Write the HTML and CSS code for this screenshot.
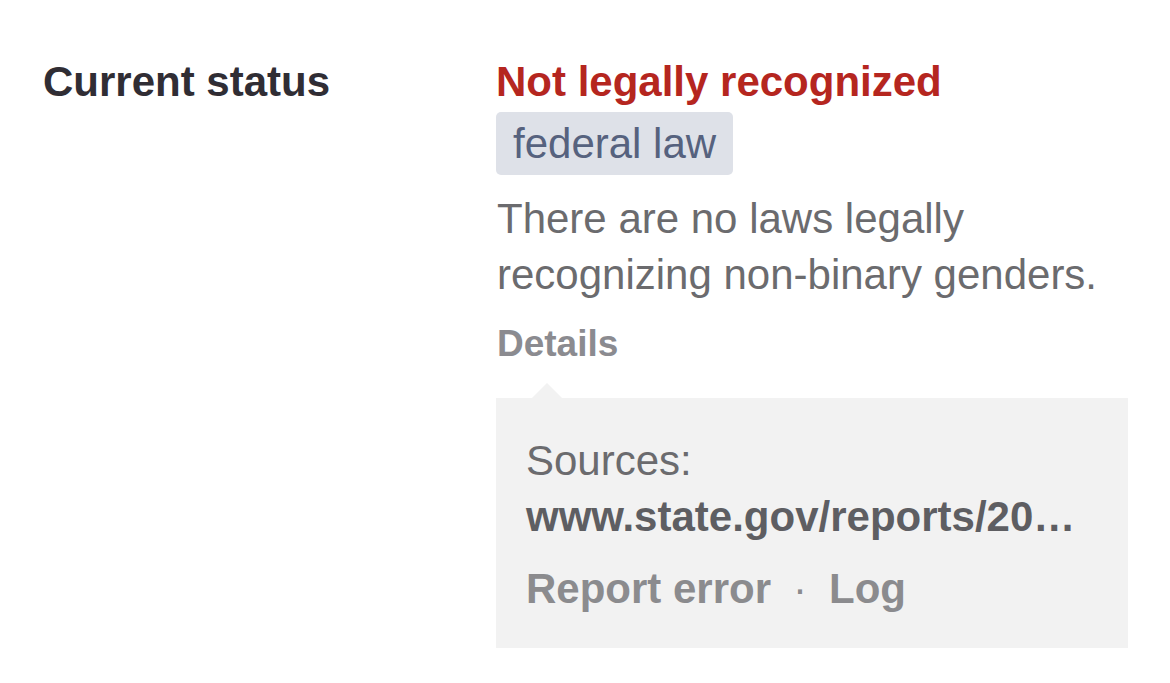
FILE: index.html
```html
<!DOCTYPE html>
<html lang="en">

<head>
    <meta charset="UTF-8"/>
    <meta name="viewport" content="width=device-width, initial-scale=1.0"/>
    <title>Current status</title>
    <link rel="stylesheet" href="styles.css">
</head>

<body>
<div class="status-row">
    <div class="status-label">Current status</div>
    <div class="status-value">
        <h2 class="status-title">Not legally recognized</h2>
        <span class="tag">federal law</span>
        <p class="status-desc">There are no laws legally recognizing non-binary genders.</p>
        <div class="details-toggle">Details</div>
        <div class="details">
            <p class="sources">Sources:</p>
            <a class="source-link" href="#" title="www.state.gov/reports/2022-country-reports-on-human-rights-practices">www.state.gov/reports/20…</a>
            <div class="details-actions">
                <a href="#">Report error</a><span class="sep">·</span><a href="#">Log</a>
            </div>
        </div>
    </div>
</div>
</body>
</html>
```

FILE: styles.css
```css
* {
    box-sizing: border-box;
}

body {
    margin: 0;
    background: #fff;
    font-family: "Liberation Sans", Arial, Helvetica, sans-serif;
    font-size: 42px;
    line-height: 56px;
}

.status-row {
    display: flex;
    padding: 54px 0 0 43px;
}

.status-label {
    width: 453px;
    flex-shrink: 0;
    font-weight: bold;
    color: #302d34;
}

.status-value {
    width: 632px;
    display: flex;
    flex-direction: column;
    align-items: flex-start;
}

.status-title {
    margin: 0;
    font-size: 42px;
    font-weight: bold;
    color: #b5261f;
}

.tag {
    margin-top: 2px;
    padding: 8px 17px 7px 17px;
    line-height: 48px;
    background: #dee1e8;
    color: #56627e;
    border-radius: 5px;
}

.status-desc {
    margin: 16px 0 0 1px;
    color: #6b6b6e;
}

.details-toggle {
    margin: 17px 0 0 1px;
    font-size: 37px;
    line-height: 48px;
    font-weight: bold;
    color: #8b8b90;
}

.details {
    position: relative;
    width: 100%;
    margin-top: 30px;
    padding: 35px 40px 31px 30px;
    background: #f2f2f2;
}

/* little caret pointing at Details */
.details::before {
    content: "";
    position: absolute;
    left: 36px;
    top: -15px;
    border-left: 15px solid transparent;
    border-right: 15px solid transparent;
    border-bottom: 15px solid #f2f2f2;
}

.sources {
    margin: 0;
    color: #6b6b6e;
}

.source-link {
    display: block;
    font-weight: bold;
    color: #5e5e62;
    text-decoration: none;
    white-space: nowrap;
}

.details-actions {
    margin-top: 16px;
    font-weight: bold;
    color: #8b8b8e;
}

.details-actions a {
    color: #8b8b8e;
    text-decoration: none;
}

.details-actions .sep {
    margin: 0 22px;
    font-weight: normal;
}
```
